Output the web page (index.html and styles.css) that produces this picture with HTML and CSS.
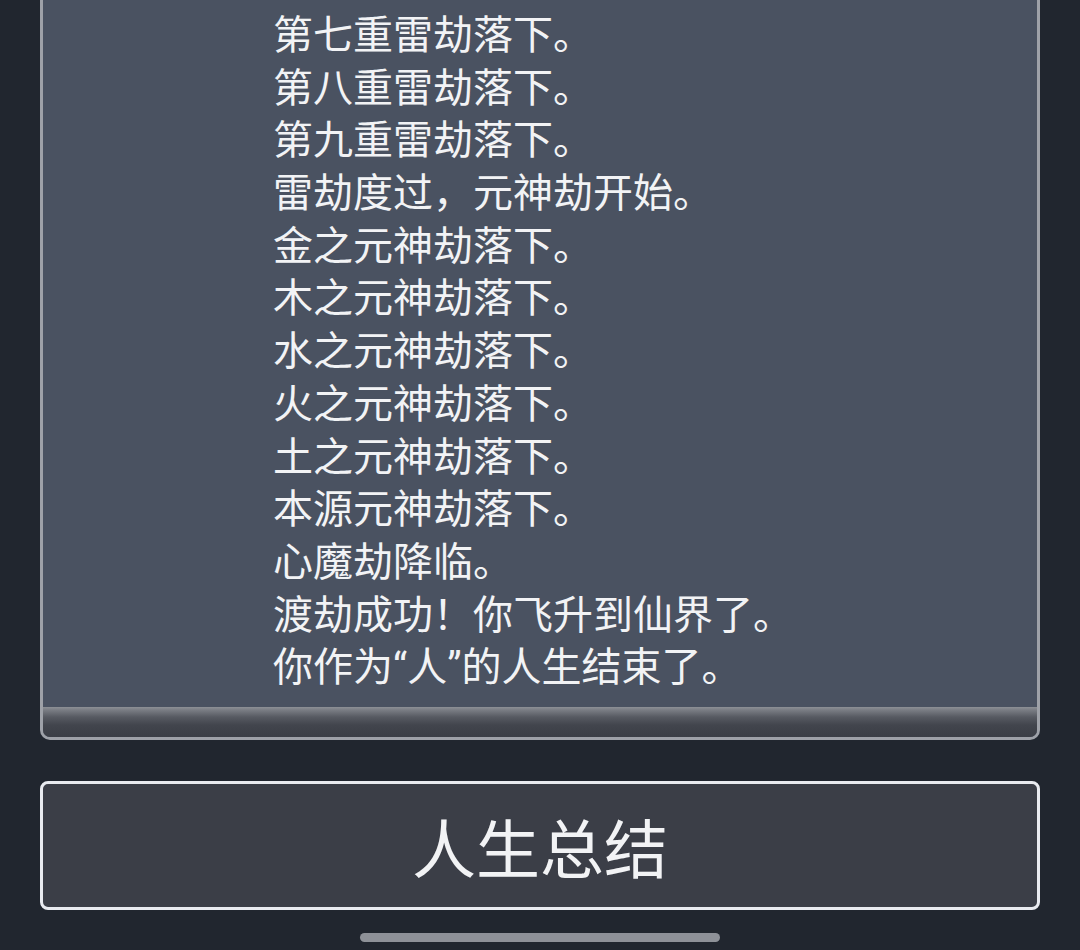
FILE: index.html
```html
<!DOCTYPE html>
<html lang="zh-CN">
<head>
<meta charset="utf-8">
<link rel="stylesheet" href="styles.css">
</head>
<body>
<div class="screen">
  <div class="panel">
    <div class="log">
      <p>第七重雷劫落下。</p>
      <p>第八重雷劫落下。</p>
      <p>第九重雷劫落下。</p>
      <p>雷劫度过，元神劫开始。</p>
      <p>金之元神劫落下。</p>
      <p>木之元神劫落下。</p>
      <p>水之元神劫落下。</p>
      <p>火之元神劫落下。</p>
      <p>土之元神劫落下。</p>
      <p>本源元神劫落下。</p>
      <p>心魔劫降临。</p>
      <p>渡劫成功！你飞升到仙界了。</p>
      <p>你作为<span class="q">“</span>人<span class="q">”</span>的人生结束了。</p>
    </div>
    <div class="shelf"></div>
  </div>
  <button class="summary">人生总结</button>
  <div class="home-bar"></div>
</div>
</body>
</html>
```

FILE: styles.css
```css
html, body {
  margin: 0;
  padding: 0;
  background: #21262f;
}

body {
  width: 1080px;
  height: 950px;
  overflow: hidden;
  font-family: "Noto Sans CJK SC", "Noto Sans", sans-serif;
}

.screen {
  display: flex;
  flex-direction: column;
  align-items: center;
  height: 950px;
}

.panel {
  width: 994px;
  background: #4a5261;
  border: 3px solid #9ea1a8;
  border-top: none;
  border-radius: 0 0 10px 10px;
  overflow: hidden;
  display: flex;
  flex-direction: column;
}

.log {
  padding: 6px 0 16px 230px;
}

.log p {
  margin: 0;
  font-size: 40px;
  line-height: 52.7px;
  height: 52.7px;
  color: #f2f3f5;
  white-space: nowrap;
}

.log .q {
  font-family: Roboto, "Noto Sans", sans-serif;
}

.shelf {
  height: 30px;
  background: linear-gradient(to bottom, #8d9096 0px, #7a7d84 3px, #575a62 10px, #42454d 18px, #3b3e46 30px);
}

.summary {
  margin-top: 41px;
  width: 1000px;
  height: 129px;
  background: #3b3e47;
  border: 3px solid #e9ebf0;
  border-radius: 8px;
  color: #f2f3f5;
  font-family: "Noto Sans CJK SC", "Noto Sans", sans-serif;
  font-size: 64px;
  line-height: 1;
  padding: 0;
  display: flex;
  align-items: center;
  justify-content: center;
}

.home-bar {
  margin-top: 23px;
  width: 360px;
  height: 9px;
  border-radius: 5px;
  background: #8e9198;
}
```
